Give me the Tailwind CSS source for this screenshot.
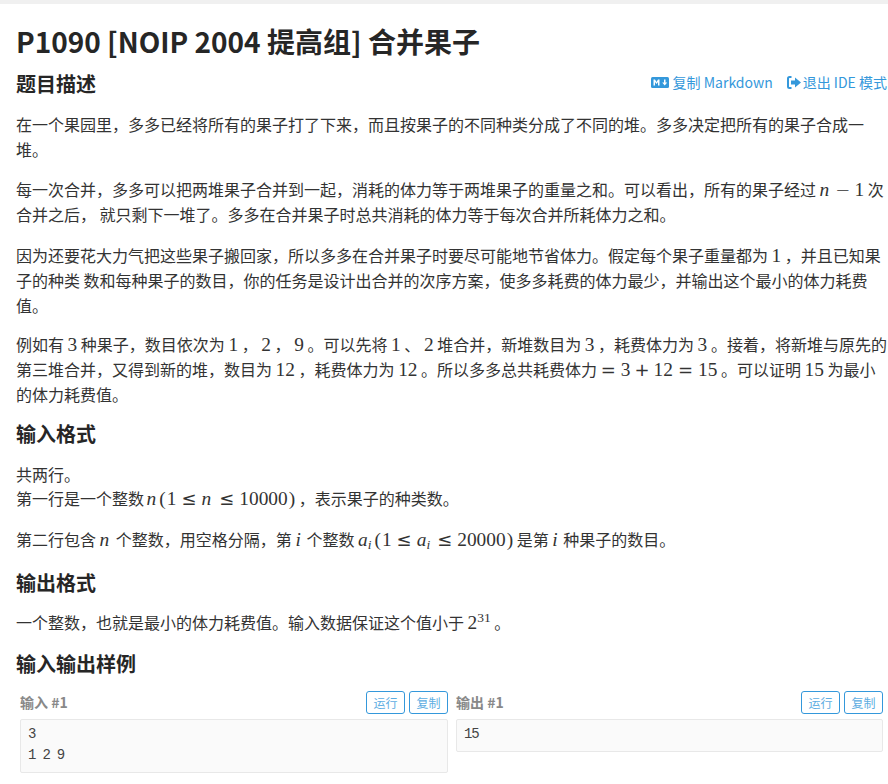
<!DOCTYPE html>
<html lang="zh-CN">
<head>
<meta charset="utf-8">
<script src="https://cdn.jsdelivr.net/npm/@tailwindcss/browser@4"></script>
</head>
<body class="bg-white overflow-hidden font-['Noto_Sans_CJK_SC','Noto_Sans',sans-serif] text-[#333]">
<div class="h-[784px] w-[888px] overflow-hidden">
  <div class="h-[4px] bg-[#f0f0f0]"></div>
  <div class="pl-[16px]">
    <h1 class="mt-[17px] text-[28px] leading-[40px] font-bold text-[#262626]">P1090 [NOIP 2004 提高组] 合并果子</h1>
    <div class="mt-[6px] flex justify-between items-center h-[34px]">
      <h2 class="text-[20px] leading-[30px] font-bold text-[#262626]">题目描述</h2>
      <div class="flex gap-[14px] pr-[1px] text-[14px] text-[#3498db] -mt-[4px]">
        <span class="flex items-center gap-[4px]">
          <svg width="18" height="11" viewBox="0 0 18 11"><rect width="18" height="11" rx="1.5" fill="#3498db"/><path d="M2.5 8.5V2.5H4L5.5 5 7 2.5h1.500v6H7V5L5.500 7 4 5v3.500zM13 2.500h1.500v3H16.200L13.700 8.500 11.200 5.500H13z" fill="#fff"/></svg>
          复制 Markdown</span>
        <span class="flex items-center gap-[2px]">
          <svg width="14" height="13" viewBox="0 0 14 13"><path d="M4.500 1H2.500A1.500 1.500 0 0 0 1 2.500v8A1.500 1.500 0 0 0 2.500 12h2" fill="none" stroke="#3498db" stroke-width="2"/><path d="M8 1.500 14 6.500 8 11.500V8.500H4V4.500H8z" fill="#3498db"/></svg>
          退出 IDE 模式</span>
      </div>
    </div>

    <div class="mt-[11px] text-[16px] leading-[25px] text-[#333]">
      <p>在一个果园里，多多已经将所有的果子打了下来，而且按果子的不同种类分成了不同的堆。多多决定把所有的果子合成一堆。</p>
      <p class="mt-[15px]">每一次合并，多多可以把两堆果子合并到一起，消耗的体力等于两堆果子的重量之和。可以看出，所有的果子经过 <span class="font-['Liberation_Serif'] text-[19.36px] leading-none"><i class="mr-[2px]">n</i><span class="mx-[4px] font-['DejaVu_Sans'] text-[18px] font-extralight">−</span>1</span> 次合并之后， 就只剩下一堆了。多多在合并果子时总共消耗的体力等于每次合并所耗体力之和。</p>
      <p class="mt-[16px]">因为还要花大力气把这些果子搬回家，所以多多在合并果子时要尽可能地节省体力。假定每个果子重量都为 <span class="font-['Liberation_Serif'] text-[19.36px] leading-none">1</span> ，并且已知果子的种类 数和每种果子的数目，你的任务是设计出合并的次序方案，使多多耗费的体力最少，并输出这个最小的体力耗费值。</p>
      <p class="mt-[14px]">例如有 <span class="font-['Liberation_Serif'] text-[19.36px] leading-none">3</span> 种果子，数目依次为 <span class="font-['Liberation_Serif'] text-[19.36px] leading-none">1</span> ， <span class="font-['Liberation_Serif'] text-[19.36px] leading-none">2</span> ， <span class="font-['Liberation_Serif'] text-[19.36px] leading-none">9</span> 。可以先将 <span class="font-['Liberation_Serif'] text-[19.36px] leading-none">1</span> 、 <span class="font-['Liberation_Serif'] text-[19.36px] leading-none">2</span> 堆合并，新堆数目为 <span class="font-['Liberation_Serif'] text-[19.36px] leading-none">3</span> ，耗费体力为 <span class="font-['Liberation_Serif'] text-[19.36px] leading-none">3</span> 。接着，将新堆与原先的第三堆合并，又得到新的堆，数目为 <span class="font-['Liberation_Serif'] text-[19.36px] leading-none">12</span> ，耗费体力为 <span class="font-['Liberation_Serif'] text-[19.36px] leading-none">12</span> 。所以多多总共耗费体力 <span class="font-['Liberation_Serif'] text-[19.36px] leading-none"><span class="mr-[5px] font-['DejaVu_Sans'] text-[18px]">=</span>3<span class="mx-[4px] font-['DejaVu_Sans'] text-[18px]">+</span>12<span class="mx-[5px] font-['DejaVu_Sans'] text-[18px]">=</span>15</span> 。可以证明 <span class="font-['Liberation_Serif'] text-[19.36px] leading-none">15</span> 为最小的体力耗费值。</p>
    </div>

    <h2 class="mt-[12px] text-[20px] leading-[30px] font-bold text-[#262626]">输入格式</h2>
    <div class="mt-[13px] text-[16px]">
      <p class="leading-[24px]">共两行。<br>第一行是一个整数 <span class="font-['Liberation_Serif'] text-[19.36px] leading-none"><i class="mr-[2px] -ml-[1px]">n</i><span class="mx-[1px]">(</span>1<span class="mx-[5px] font-['DejaVu_Sans'] text-[18px]">≤</span><i class="mr-[3px]">n</i><span class="mx-[5px] font-['DejaVu_Sans'] text-[18px]">≤</span>10000<span class="ml-[1px]">)</span></span> ，表示果子的种类数。</p>
      <p class="mt-[17px] leading-[25px]">第二行包含 <span class="font-['Liberation_Serif'] text-[19.36px] leading-none"><i class="mr-[3px]">n</i></span> 个整数，用空格分隔，第 <span class="font-['Liberation_Serif'] text-[19.36px] leading-none"><i class="mr-[2px]">i</i></span> 个整数 <span class="font-['Liberation_Serif'] text-[19.36px] leading-none"><i>a<sub class="text-[13.5px] mr-[2px]">i</sub></i><span class="mx-[1px]">(</span>1<span class="mx-[5px] font-['DejaVu_Sans'] text-[18px]">≤</span><i>a<sub class="text-[13.5px] mr-[2px]">i</sub></i><span class="mx-[5px] font-['DejaVu_Sans'] text-[18px]">≤</span>20000<span class="ml-[1px]">)</span></span> 是第 <span class="font-['Liberation_Serif'] text-[19.36px] leading-none"><i class="mr-[2px]">i</i></span> 种果子的数目。</p>
    </div>

    <h2 class="mt-[16px] text-[20px] leading-[30px] font-bold text-[#262626]">输出格式</h2>
    <p class="mt-[12px] text-[16px] leading-[25px]">一个整数，也就是最小的体力耗费值。输入数据保证这个值小于 <span class="font-['Liberation_Serif'] text-[19.36px] leading-none">2<sup class="text-[13.5px]">31</sup></span> 。</p>

    <h2 class="mt-[14px] text-[20px] leading-[30px] font-bold text-[#262626]">输入输出样例</h2>

    <div class="mt-[11px] grid grid-cols-[428px_427px] gap-x-[8px] pl-[4px]">
      <div>
        <div class="flex justify-between items-center h-[25px]">
          <span class="text-[14px] font-bold text-[#888]">输入 #1</span>
          <div class="flex gap-[4px]">
            <span class="w-[39px] h-[23px] border border-[#3498db] rounded-[3px] text-[12px] text-[#5dade2] flex items-center justify-center">运行</span>
            <span class="w-[39px] h-[23px] border border-[#3498db] rounded-[3px] text-[12px] text-[#5dade2] flex items-center justify-center">复制</span>
          </div>
        </div>
        <pre class="mt-[4px] h-[54px] border border-[#e8e8e8] rounded-[2px] bg-[#fafafa] px-[7px] pt-[4px] text-[14px] tracking-[-1.2px] leading-[21px] text-[#444] font-['Liberation_Mono',monospace]">3
1 2 9</pre>
      </div>
      <div>
        <div class="flex justify-between items-center h-[25px]">
          <span class="text-[14px] font-bold text-[#888]">输出 #1</span>
          <div class="flex gap-[4px]">
            <span class="w-[39px] h-[23px] border border-[#3498db] rounded-[3px] text-[12px] text-[#5dade2] flex items-center justify-center">运行</span>
            <span class="w-[39px] h-[23px] border border-[#3498db] rounded-[3px] text-[12px] text-[#5dade2] flex items-center justify-center">复制</span>
          </div>
        </div>
        <pre class="mt-[4px] h-[33px] border border-[#e8e8e8] rounded-[2px] bg-[#fafafa] px-[7px] pt-[4px] text-[14px] tracking-[-1.2px] leading-[21px] text-[#444] font-['Liberation_Mono',monospace]">15</pre>
      </div>
    </div>
  </div>
</div>
</body>
</html>
